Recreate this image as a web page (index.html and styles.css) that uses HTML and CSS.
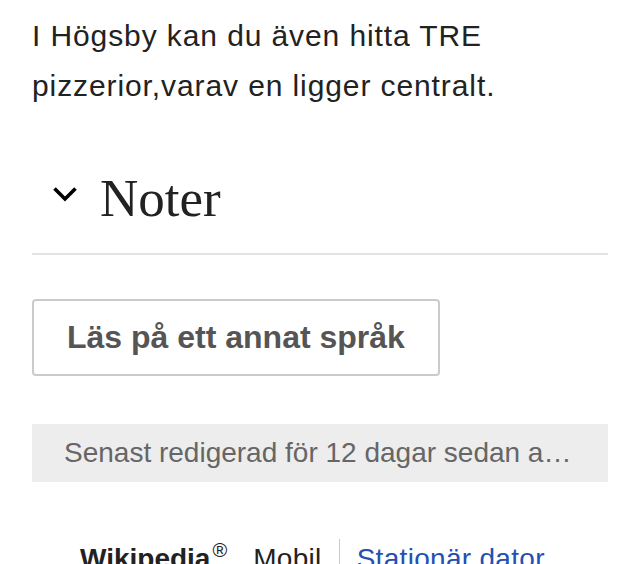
FILE: index.html
```html
<!DOCTYPE html>
<html lang="sv">
<head>
<meta charset="utf-8">
<link rel="stylesheet" href="styles.css">
</head>
<body>
<main class="content">
  <p class="para">I Högsby kan du även hitta TRE pizzerior,varav en ligger centralt.</p>
  <h2 class="section-heading">
    <svg class="chevron" width="26" height="17" viewBox="0 0 26 17"><polyline points="2.5,2.5 13,13 23.5,2.5" fill="none" stroke="#000" stroke-width="3.6" stroke-linecap="butt"/></svg>
    <span class="heading-text">Noter</span>
  </h2>
  <button class="lang-btn">Läs på ett annat språk</button>
  <div class="last-edit">Senast redigerad för 12 dagar sedan a…</div>
  <footer class="footer">
    <span class="brand">Wikipedia<sup class="reg">®</sup></span>
    <span class="mode">Mobil</span>
    <span class="sep"></span>
    <a class="desktop" href="#">Stationär dator</a>
  </footer>
</main>
</body>
</html>
```
FILE: styles.css
```css
html, body {
  margin: 0;
  padding: 0;
  background: #fff;
}
body {
  width: 640px;
  height: 564px;
  overflow: hidden;
  font-family: "Liberation Sans", Arial, sans-serif;
  color: #222;
}
.content {
  padding: 0 32px;
}
.para {
  margin: 0;
  padding-top: 11px;
  width: 480px;
  font-size: 30px;
  line-height: 50px;
  letter-spacing: 0.9px;
  color: #222;
}
.section-heading {
  margin: 61px 0 0;
  padding: 0 0 29px 20px;
  border-bottom: 2px solid #e3e3e3;
  display: flex;
  align-items: flex-start;
  gap: 22px;
  font-weight: normal;
}
.chevron {
  margin-top: 14px;
  flex: none;
}
.heading-text {
  font-family: "Liberation Serif", "Times New Roman", serif;
  font-size: 53px;
  line-height: 52px;
  color: #222;
}
.lang-btn {
  display: flex;
  align-items: center;
  box-sizing: border-box;
  height: 77px;
  margin-top: 44px;
  padding: 0 33px;
  background: #fff;
  border: 2px solid #cbcbcb;
  border-radius: 4px;
  font-family: "Liberation Sans", Arial, sans-serif;
  font-weight: bold;
  font-size: 32px;
  color: #555;
}
.last-edit {
  margin-top: 48px;
  height: 58px;
  display: flex;
  align-items: center;
  padding-left: 32px;
  background: #ededed;
  font-size: 28px;
  color: #666;
  white-space: nowrap;
}
.footer {
  margin-top: 59px;
  padding-left: 48px;
  display: flex;
  align-items: baseline;
  font-size: 28px;
  line-height: 35px;
  letter-spacing: 0.3px;
}
.brand {
  font-weight: bold;
  color: #222;
  letter-spacing: 0;
}
.reg {
  font-weight: normal;
  font-size: 20px;
  vertical-align: 11px;
  line-height: 0;
  margin-left: 2px;
}
.mode {
  margin-left: 26px;
  color: #222;
}
.sep {
  align-self: stretch;
  width: 1px;
  background: #c8ccd1;
  margin: -2px 17px 0;
}
.desktop {
  color: #2450b2;
  text-decoration: none;
}
```
